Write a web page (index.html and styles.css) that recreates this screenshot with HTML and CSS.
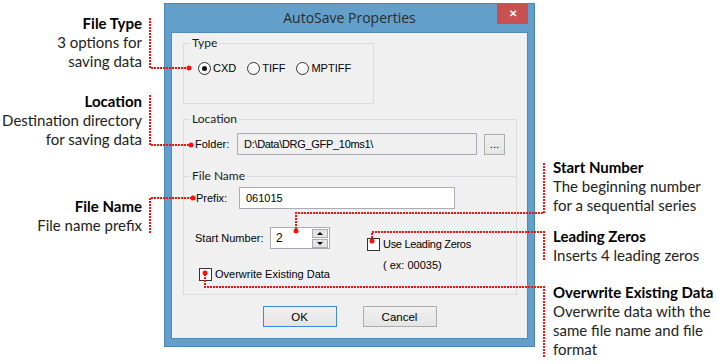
FILE: index.html
```html
<!DOCTYPE html>
<html lang="en">
<head>
    <meta charset="UTF-8">
    <meta name="viewport" content="width=device-width, initial-scale=1.0">
    <title>AutoSave Properties</title>
    <link rel="stylesheet" href="styles.css">
</head>
<body>
    <div id="page">
        <div class="notes notes-left">
            <div class="note" id="note-type"><b>File Type</b><br>3 options for<br>saving data</div>
            <div class="note" id="note-location"><b>Location</b><br>Destination directory<br>for saving data</div>
            <div class="note" id="note-name"><b>File Name</b><br>File name prefix</div>
        </div>

        <div class="dialog">
            <div class="titlebar">
                <span class="title">AutoSave Properties</span>
                <span class="close">&#x2715;</span>
            </div>
            <div class="client">
                <fieldset class="group" id="group-type">
                    <legend>Type</legend>
                    <div class="radios">
                        <span class="radio checked"><i></i>CXD</span>
                        <span class="radio"><i></i>TIFF</span>
                        <span class="radio"><i></i>MPTIFF</span>
                    </div>
                </fieldset>

                <fieldset class="group" id="group-location">
                    <legend>Location</legend>
                    <div class="row">
                        <span class="label" id="label-folder">Folder:</span>
                        <span class="textbox readonly" id="folder">D:\Data\DRG_GFP_10ms1\</span>
                        <span class="btn btn-small">...</span>
                    </div>
                </fieldset>

                <fieldset class="group" id="group-name">
                    <legend>File Name</legend>
                    <div class="row">
                        <span class="label" id="label-prefix">Prefix:</span>
                        <span class="textbox" id="prefix">061015</span>
                    </div>
                    <div class="options">
                        <div class="col-left">
                            <div class="row">
                                <span class="label" id="label-start">Start Number:</span>
                                <span class="spin">
                                    <span class="spin-value">2</span>
                                    <span class="spin-btns">
                                        <span class="spin-btn up"></span>
                                        <span class="spin-btn down"></span>
                                    </span>
                                </span>
                            </div>
                            <span class="check" id="check-overwrite"><i></i>Overwrite Existing Data</span>
                        </div>
                        <div class="col-right">
                            <span class="check" id="check-zeros"><i></i>Use Leading Zeros</span>
                            <span class="hint">( ex: 00035)</span>
                        </div>
                    </div>
                </fieldset>

                <div class="buttons">
                    <span class="btn btn-default">OK</span>
                    <span class="btn">Cancel</span>
                </div>
            </div>
        </div>

        <div class="notes notes-right">
            <div class="note" id="note-start"><b>Start Number</b><br>The beginning number<br>for a sequential series</div>
            <div class="note" id="note-zeros"><b>Leading Zeros</b><br>Inserts 4 leading zeros</div>
            <div class="note" id="note-overwrite"><b>Overwrite Existing Data</b><br>Overwrite data with the<br>same file name and file<br>format</div>
        </div>
    </div>

    <!-- leader lines from the notes to the controls -->
    <svg class="leaders" width="724" height="364" viewBox="0 0 724 364">
        <g fill="none" stroke="#ff1010" stroke-width="2" stroke-dasharray="2 1">
            <path d="M150 18 V68 H189"/>
            <path d="M150 95 V145 H191"/>
            <path d="M150 233 V198 H193"/>
            <path d="M544 163 V213 H296 V231"/>
            <path d="M544 260 V232 H372 V241"/>
            <path d="M544 357 V287 H205 V273"/>
        </g>
        <g fill="#ff1010">
            <circle cx="189" cy="68" r="2.5"/>
            <circle cx="191" cy="145" r="2.5"/>
            <circle cx="193" cy="198" r="2.5"/>
            <circle cx="296" cy="231" r="2.5"/>
            <circle cx="372" cy="241" r="2.5"/>
            <circle cx="205" cy="273" r="2.5"/>
        </g>
    </svg>
</body>
</html>
```

FILE: styles.css
```css
*{
    margin: 0;
    padding: 0;
    box-sizing: border-box;
}

body{
    width: 724px;
    height: 364px;
    background: #fff;
    position: relative;
    overflow: hidden;
}

#page{
    display: flex;
    align-items: flex-start;
}

/* annotations */
.notes{
    font-family: Lato, "Liberation Sans", sans-serif;
    font-size: 15px;
    line-height: 19px;
    color: #222;
}
.notes b{
    color: #000;
}
.notes-left{
    width: 142px;
    text-align: right;
    padding-top: 14px;
}
.notes-right{
    margin-left: 18px;
    padding-top: 158px;
}
#note-location{ margin-top: 21px; }
#note-name{ margin-top: 48px; }
#note-zeros{ margin-top: 12px; }
#note-overwrite{ margin-top: 18px; }

/* dialog window */
.dialog{
    margin-left: 22px;
    margin-top: 3px;
    width: 371px;
    height: 344px;
    background: #62a0cb;
    border: 1px solid #4a86b5;
    font-family: "Liberation Sans", Arial, sans-serif;
    font-size: 11px;
    color: #000;
}
.titlebar{
    height: 28px;
    display: grid;
    grid-template-columns: 1fr auto 1fr;
    padding: 0 6px;
}
.title{
    grid-column: 2;
    font-family: "Open Sans", sans-serif;
    font-size: 14px;
    line-height: 28px;
    color: #2b2b2b;
}
.close{
    grid-column: 3;
    justify-self: end;
    width: 31px;
    height: 20px;
    background: #c75050;
    color: #fff;
    font-size: 10px;
    font-weight: bold;
    text-align: center;
    line-height: 20px;
}
.client{
    margin: 0 6px 0 6px;
    height: 307px;
    background: #f0f0f0;
    border: 1px solid #4f8bb9;
    padding: 3px 0 0 11px;
}

/* group boxes */
.group{
    width: 334px;
    border: 1px solid #dcdcdc;
    padding: 0 0 0 11px;
}
.group legend{
    margin-left: -5px;
    padding: 0 2px;
    font-family: Lato, "Liberation Sans", sans-serif;
    font-size: 12px;
    line-height: 14px;
    color: #1a1a1a;
}
#group-type{
    width: 191px;
    padding: 11px 0 28px 14px;
}
#group-type legend{
    margin-left: -8px;
}
#group-location{
    margin-top: 8px;
    border-bottom: none;
    padding-top: 7px;
    padding-bottom: 21px;
}
#group-name{
    margin-top: -7px;
    padding-top: 4px;
    padding-bottom: 13px;
}

.radios{
    display: flex;
    height: 14px;
    align-items: center;
}
.radio{
    display: flex;
    align-items: center;
    gap: 2px;
    margin-right: 11px;
}
.radio i{
    width: 13px;
    height: 13px;
    border: 1px solid #333;
    border-radius: 50%;
    background: linear-gradient(#fff, #f2f2f2);
    display: flex;
    align-items: center;
    justify-content: center;
}
.radio.checked i::after{
    content: "";
    width: 5px;
    height: 5px;
    border-radius: 50%;
    background: #111;
}

.row{
    display: flex;
    align-items: center;
    height: 22px;
}
.label{
    flex: none;
}
#label-folder{ width: 42px; }
#label-prefix{ width: 43px; margin-left: 1px; }
#label-start{ width: 75px; }

.textbox{
    height: 22px;
    border: 1px solid #abadb3;
    background: #fff;
    line-height: 20px;
    padding-left: 6px;
}
#folder{
    width: 240px;
    background: #f0f0f0;
    letter-spacing: -0.3px;
}
#prefix{
    width: 216px;
}

.btn{
    display: flex;
    align-items: center;
    justify-content: center;
    width: 74px;
    height: 21px;
    border: 1px solid #adadad;
    background: linear-gradient(#f0f0f0, #e5e5e5);
    font-size: 11.5px;
}
.btn-small{
    width: 21px;
    height: 21px;
    margin-left: 7px;
    align-items: flex-end;
    padding-bottom: 4px;
}
.btn-default{
    border-color: #3c8ad8;
}

.options{
    display: flex;
    margin-top: 18px;
}
.col-left{
    width: 172px;
    display: flex;
    flex-direction: column;
}
.col-right{
    display: flex;
    flex-direction: column;
    padding-top: 10px;
}

.spin{
    display: flex;
    width: 60px;
    height: 22px;
    border: 1px solid #abadb3;
    background: #fff;
}
.spin-value{
    flex: 1;
    padding-left: 5px;
    line-height: 20px;
    font-size: 12px;
}
.spin-btns{
    display: flex;
    flex-direction: column;
    gap: 1px;
    padding: 1px 1px 0 0;
}
.spin-btn{
    width: 16px;
    height: 9px;
    border: 1px solid #acacac;
    background: #e5e5e5;
    display: flex;
    align-items: center;
    justify-content: center;
}
.spin-btn::after{
    content: "";
    border-left: 3px solid transparent;
    border-right: 3px solid transparent;
}
.spin-btn.up::after{ border-bottom: 3px solid #000; }
.spin-btn.down::after{ border-top: 3px solid #000; }

.check{
    display: flex;
    align-items: center;
    gap: 3px;
    height: 14px;
}
.check i{
    width: 13px;
    height: 13px;
    border: 1px solid #333;
    background: #fff;
}
#check-overwrite{
    margin-top: 18px;
    margin-left: 4px;
}
#check-zeros{
    letter-spacing: -0.3px;
}
.hint{
    margin-top: 8px;
    margin-left: 16px;
}

.buttons{
    display: flex;
    justify-content: center;
    gap: 26px;
    margin-top: 11px;
    margin-left: -11px;
}

.leaders{
    position: absolute;
    left: 0;
    top: 0;
    pointer-events: none;
}
```
